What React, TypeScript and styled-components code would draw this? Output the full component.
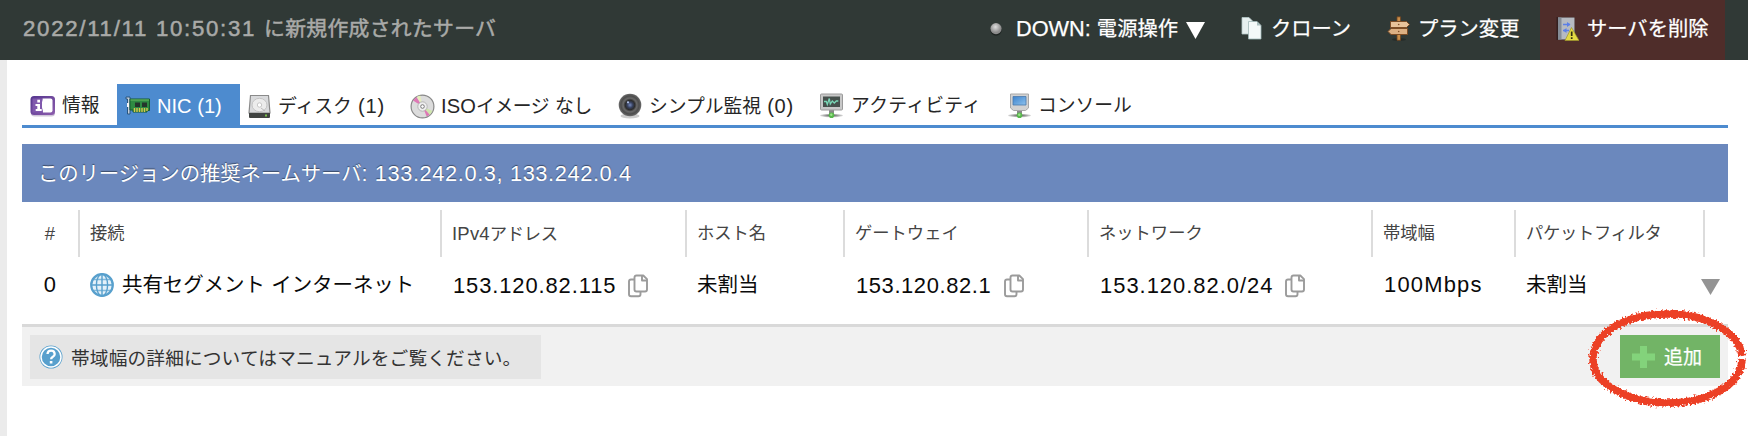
import React from "react";
import styled, { createGlobalStyle } from "styled-components";

const GlobalStyle = createGlobalStyle`
  * { box-sizing: border-box; }
  body {
    margin: 0;
    background: #fff;
    font-family: "Liberation Sans", "Noto Sans CJK JP", sans-serif;
    overflow: hidden;
  }
`;

const Page = styled.div`
  position: relative;
  display: flex;
  flex-direction: column;
  width: 1748px;
  height: 436px;
`;

const TopBar = styled.header`
  display: flex;
  flex: none;
  height: 60px;
  padding-right: 23px;
  background: #303936;
`;

const Title = styled.h1`
  flex: 1;
  margin: 0;
  padding-left: 23px;
  font-size: 20px;
  line-height: 58px;
  font-weight: 400;
  color: #a9aaa8;
  -webkit-text-stroke: 0.5px;
`;

const Action = styled.button<{ $width: number; $icon: number; $danger?: boolean }>`
  display: grid;
  grid-template-columns: ${(p) => p.$icon}px 1fr;
  align-items: center;
  width: ${(p) => p.$width}px;
  height: 60px;
  padding: 1px 0 0;
  border: 0;
  text-align: left;
  line-height: 40px;
  font-family: inherit;
  color: #fff;
  background: ${(p) => (p.$danger ? "#4f2d2a" : "transparent")};
  -webkit-text-stroke: 0.25px;
  svg { justify-self: end; margin: 0 8px 4px 0; }
`;

const Body = styled.div`
  display: flex;
  flex: 1;
`;

const Rail = styled.div`
  flex: none;
  width: 7px;
  background: #ebebeb;
`;

const Main = styled.main`
  display: flex;
  flex-direction: column;
  width: 1721px;
  padding: 24px 0 0 15px;
`;

const Tabs = styled.nav`
  display: flex;
  height: 44px;
  border-bottom: 3px solid #4d8bcf;
`;

const Tab = styled.a<{ $width: number; $gap?: number; $active?: boolean }>`
  display: flex;
  align-items: center;
  flex: none;
  width: ${(p) => p.$width}px;
  height: 41px;
  padding: 4px 0 0 8px;
  gap: ${(p) => p.$gap ?? 6}px;
  line-height: 30px;
  color: ${(p) => (p.$active ? "#fff" : "#262626")};
  background: ${(p) => (p.$active ? "#4d8bcf" : "transparent")};
  svg { margin-bottom: 1px; }
`;

const Notice = styled.div`
  height: 58px;
  margin-top: 16px;
  padding-left: 16px;
  line-height: 60px;
  color: #fff;
  background: #6b88bd;
  text-shadow: 0 -1px 1px rgba(0, 0, 0, 0.45);
`;

const Row = styled.div`
  display: grid;
  grid-template-columns: 56px 362px 245px 158px 244px 284px 143px 189px 25px;
`;

const HeadRow = styled(Row)`
  height: 47px;
  margin-top: 8px;
  line-height: 47px;
  color: #444;
`;

const HeadCell = styled.div`
  height: 47px;
  padding-left: 10px;
  border-left: 2px solid #dcdcdc;
  &:first-child {
    padding: 0;
    border: 0;
    text-align: center;
  }
`;

const DataRow = styled(Row)`
  height: 67px;
  padding-bottom: 10px;
  color: #0a0a0a;
`;

const Cell = styled.div<{ $gap?: number; $drop?: number }>`
  display: flex;
  align-items: center;
  gap: ${(p) => p.$gap ?? 8}px;
  padding-left: 12px;
  padding-top: ${(p) => p.$drop ?? 0}px;
  line-height: 30px;
  &:first-child {
    justify-content: center;
    padding-left: 0;
  }
  svg { margin-bottom: 2px; }
`;

const AddressCell = styled(Cell)`
  padding-left: 13px;
`;

const MenuCell = styled(Cell)`
  padding-left: 0;
  margin-left: -2px;
`;

const Footer = styled.footer`
  display: flex;
  align-items: flex-start;
  justify-content: space-between;
  height: 62px;
  padding: 8px 8px 0;
  border-top: 3px solid #d9d9d9;
  background: #f1f1f1;
`;

const Help = styled.div`
  display: flex;
  align-items: center;
  gap: 8px;
  width: 511px;
  height: 44px;
  padding: 0 0 2px 9px;
  color: #333;
  background: #e5e5e5;
  svg { margin-top: 1px; }
`;

const AddButton = styled.button`
  display: flex;
  align-items: center;
  gap: 8px;
  width: 100px;
  height: 43px;
  padding: 0 0 2px 12px;
  border: 0;
  font-family: inherit;
  color: #fff;
  background: #72b466;
  -webkit-text-stroke: 0.25px;
  svg { margin-top: 2px; }
`;

const Ring = styled.svg`
  position: absolute;
  left: 1580px;
  top: 300px;
  pointer-events: none;
`;

const Run = styled.span<{ $size: number; $spacing: number }>`
  font-size: ${(p) => p.$size}px;
  letter-spacing: ${(p) => p.$spacing}px;
`;

const Line = styled.span`
  white-space: pre;
`;

interface TextProps {
  children: string;
  size: number;
  ls?: number;
  jls?: number;
}

/* Sets Latin runs slightly larger than the Japanese ones, so that their heights agree. */
const Text = ({ children, size, ls = 0.4, jls = 0 }: TextProps) => (
  <Line>
    {children.split(/([\x20-\x7e]+)/).filter(Boolean).map((part, i) => {
      const latin = /^[\x20-\x7e]/.test(part);
      return (
        <Run key={i} $size={latin ? size * 1.07 : size} $spacing={latin ? ls : jls}>
          {part}
        </Run>
      );
    })}
  </Line>
);

const InfoIcon = () => (
  <svg width="26" height="24" viewBox="0 0 26 24">
    <defs>
      <linearGradient id="info" x1="0" y1="0" x2="1" y2="1">
        <stop offset="0" stopColor="#54368e" />
        <stop offset="1" stopColor="#8d5dad" />
      </linearGradient>
    </defs>
    <rect x="1" y="3" width="24" height="19.5" rx="3.5" fill="#cfc6d8" />
    <rect x="0.5" y="2" width="24.5" height="19" rx="3.5" fill="url(#info)" />
    <path d="M12.500 4.500h8q2 0 2 2v10q0 2-2 2h-7.500q-2-6-.5-14z" fill="#fff" />
    <path d="M2.500 4.500h10q-1.500 8 .5 14H2.500z" fill="#8059ad" />
    <path d="M7.300 5.800h2.700v2.600H7.300zM5.500 10h4.500v5h1.700v2H5.700v-2h1.600v-3H5.500z" fill="#fff" />
  </svg>
);

const NicIcon = () => (
  <svg width="26" height="22" viewBox="0 0 26 22">
    <path d="M1 2h4v17H2.5V4H1z" fill="#c8d0da" stroke="#28557e" strokeWidth="1" />
    <path d="M2 8h2v4H2z" fill="#f5f5f5" />
    <path d="M5 4h19.5v11.5H22V17H8v-2H5z" fill="#2e8a42" stroke="#175a2e" />
    <path d="M5.500 5h18.500" stroke="#6dbb62" />
    <path d="M10 7.500h5v4.500h-5zM17 7.500h5v4.500h-5z" fill="#24352c" />
    <path d="M9.500 13v4M12 13v4M14.500 13v4M17 13v4M19.500 13v4M22 13v3" stroke="#d6c64d" strokeWidth="1.4" />
  </svg>
);

const DiskIcon = () => (
  <svg width="23" height="25" viewBox="0 0 23 25">
    <path d="M2.5 1.5h18L22 19H1z" fill="#d9dadc" stroke="#8a8a8a" strokeWidth="1.2" />
    <ellipse cx="11.5" cy="11" rx="7.5" ry="6.7" fill="#ececec" stroke="#c3c3c3" />
    <circle cx="11.5" cy="11" r="2.2" fill="#fff" stroke="#bbb" strokeWidth="0.8" />
    <path d="M13 14l4 3" stroke="#bbb" />
    <path d="M1 19h21v4q0 1-1 1H2q-1 0-1-1z" fill="#404341" />
    <path d="M17 20.5h2v2h-2z" fill="#79c34a" />
  </svg>
);

const DiscIcon = () => (
  <svg width="25" height="25" viewBox="0 0 25 25">
    <circle cx="12.5" cy="12.5" r="11.4" fill="#dcdcdc" stroke="#888" strokeWidth="1.2" />
    <path d="M12.5 12.5L3 6.5 6.5 3z" fill="#dd78b5" />
    <path d="M12.5 12.5l7 8.7 3-4.2z" fill="#cfe6ad" />
    <path d="M12.5 12.5l4.2 10 3-1.7z" fill="#dd78b5" />
    <path d="M12.5 12.5L6.8 2.8l3.5-1.3z" fill="#e6eebc" />
    <circle cx="12.5" cy="12.5" r="4.7" fill="#eee" stroke="#aaa" strokeWidth="0.8" />
    <circle cx="12.5" cy="12.5" r="1.8" fill="#fff" stroke="#777" />
  </svg>
);

const LensIcon = () => (
  <svg width="24" height="26" viewBox="0 0 24 26">
    <defs>
      <radialGradient id="lens">
        <stop offset="0" stopColor="#7589bd" />
        <stop offset="0.25" stopColor="#36405c" />
        <stop offset="0.42" stopColor="#2c2c2c" />
        <stop offset="0.6" stopColor="#6a6a6a" />
        <stop offset="0.8" stopColor="#4c4c4c" />
        <stop offset="1" stopColor="#6c6c6c" />
      </radialGradient>
    </defs>
    <ellipse cx="12" cy="23" rx="9.5" ry="2.5" fill="#ccc" />
    <circle cx="12" cy="12" r="11.3" fill="url(#lens)" />
    <circle cx="10" cy="9.3" r="1.1" fill="#b3c3ea" />
  </svg>
);

const MonitorIcon = ({ activity }: { activity?: boolean }) => (
  <svg width="25" height="26" viewBox="0 0 25 26">
    <defs>
      <linearGradient id="screen" x1="0" y1="0" x2="1" y2="1">
        <stop offset="0" stopColor="#3d83cd" />
        <stop offset="1" stopColor="#8ec2ed" />
      </linearGradient>
      <radialGradient id="shade">
        <stop offset="0" stopColor="#555" />
        <stop offset="1" stopColor="#ddd" />
      </radialGradient>
    </defs>
    <ellipse cx="12.5" cy="22.5" rx="11.5" ry="1.8" fill="url(#shade)" />
    <path d="M10 17h5v5h-5z" fill="#888" />
    {activity ? (
      <>
        <rect x="1.5" y="1" width="22" height="16" rx="1" fill="#c8c8c8" stroke="#9b9b9b" />
        <path d="M4 3.5h17v10.5H4z" fill="#46504c" />
        <path d="M5 8.5h2.3l1 3 2-6 1 5.5 2-3 2 2 2-2h2" fill="none" stroke="#7ad7b6" strokeWidth="1.3" />
      </>
    ) : (
      <>
        <path d="M3.500 1h18v14l-3 2.500H6.500l-3-2.500z" fill="#d2d2d2" stroke="#a8a8a8" />
        <path d="M6 3.500h13v8.500H6z" fill="url(#screen)" stroke="#4a79ac" strokeWidth="0.8" />
      </>
    )}
    <circle cx="12.5" cy="22.3" r="2.8" fill="#58b84d" />
    <circle cx="12.3" cy="21.7" r="1.2" fill="#9de28a" />
  </svg>
);

const LampIcon = () => (
  <svg width="14" height="14" viewBox="0 0 14 14">
    <defs>
      <radialGradient id="lamp" cx="0.45" cy="0.35">
        <stop offset="0" stopColor="#dedede" />
        <stop offset="1" stopColor="#8b8b8b" />
      </radialGradient>
    </defs>
    <circle cx="7" cy="8" r="5.8" fill="#1f2523" />
    <circle cx="7" cy="6.6" r="5.6" fill="url(#lamp)" />
  </svg>
);

const CloneIcon = () => (
  <svg width="22" height="25" viewBox="0 0 22 25">
    <path d="M1 1.5h7l3.5 3.5v13H1z" fill="#e6efef" stroke="#b4c8c8" strokeWidth="0.8" />
    <path d="M7.5 5.5h8.5l4 4v13.5H7.5z" fill="#f4f9f9" stroke="#a0b8b8" strokeWidth="0.8" />
    <path d="M16 5.5v4h4z" fill="#a9bebe" />
  </svg>
);

const SignIcon = () => (
  <svg width="23" height="26" viewBox="0 0 23 26">
    <ellipse cx="12" cy="23.5" rx="7" ry="1.5" fill="#242b29" />
    <path d="M10 0.8h3.5v23.5H10z" fill="#c98d49" stroke="#704420" strokeWidth="0.8" />
    <path d="M3.500 5.500h16l3 3-3 3h-16z" fill="#e8c39a" stroke="#7d4d25" strokeWidth="1" />
    <path d="M20.500 12.500H4l-3 3 3 3h16.500z" fill="#dcb083" stroke="#7d4d25" strokeWidth="1" />
    <circle cx="11.7" cy="8.5" r="0.8" fill="#805128" />
    <circle cx="11.7" cy="15.5" r="0.8" fill="#805128" />
  </svg>
);

const ServerIcon = () => (
  <svg width="23" height="26" viewBox="0 0 23 26">
    <path d="M0.500 24V1h18v23z" fill="#342020" />
    <path d="M2 1.5h16.5v22H2z" fill="#b6bac1" />
    <path d="M2 1.5h3.5v22H2z" fill="#858c96" />
    <path d="M7 8.5h7M7 14.5h6" stroke="#5b7fe8" strokeWidth="1.3" />
    <path d="M11 6l3.500 2.500-3.500 2.500zM10.500 12l-3.500 2.500 3.500 2.500z" fill="#5b7fe8" />
    <path d="M15.5 11.5l7.5 13H9z" fill="#e4d943" stroke="#9d952b" strokeWidth="0.7" />
    <path d="M15.7 15.5v4.5M15.7 21.3v1.7" stroke="#322f12" strokeWidth="1.7" />
  </svg>
);

const GlobeIcon = () => (
  <svg width="24" height="24" viewBox="0 0 24 24" fill="none" stroke="#58a0cd" strokeWidth="1.4">
    <circle cx="12" cy="12" r="10.8" fill="#e4f1f9" strokeWidth="2.2" />
    <ellipse cx="12" cy="12" rx="5.6" ry="11" />
    <path d="M12 1v22M1 12h22" />
    <path d="M3 6.500h18M3 17.500h18" strokeOpacity="0.7" />
  </svg>
);

const CopyIcon = () => (
  <svg width="20" height="24" viewBox="0 0 20 24" fill="none" stroke="#9b9b9b" strokeWidth="1.9" strokeLinejoin="round">
    <path d="M8.5 1.5h6.8l3.7 3.7v10.3q0 2-2 2H8.5q-2 0-2-2v-12q0-2 2-2z" />
    <path d="M14 1.5v5H19" />
    <path d="M6 5.5H3q-2 0-2 2v12.800q0 2 2 2h7.500q2 0 2-2V18" />
  </svg>
);

const HelpIcon = () => (
  <svg width="24" height="24" viewBox="0 0 24 24">
    <circle cx="12" cy="12" r="11.5" fill="#58a0cd" />
    <circle cx="12" cy="12" r="10" fill="none" stroke="#fff" strokeWidth="1.5" />
    <path d="M8.5 9q.3-3.300 3.600-3.300T15.700 9q0 1.700-1.800 2.700t-1.800 2.500" fill="none" stroke="#fff" strokeWidth="2.3" />
    <path d="M10.8 16h2.600v2.500h-2.600z" fill="#fff" />
  </svg>
);

const Triangle = ({ color, height }: { color: string; height: number }) => (
  <svg width="19" height={height} viewBox="0 0 19 16" preserveAspectRatio="none">
    <path d="M0 0h19L9.5 16z" fill={color} />
  </svg>
);

const PowerLabel = styled.span`
  display: flex;
  align-items: center;
  gap: 8px;
  && svg { margin: 0; }
`;

const LampSlot = styled.span`
  display: flex;
  justify-content: flex-end;
  padding-right: 5px;
`;

export default function App() {
  return (
    <Page>
      <GlobalStyle />
      <TopBar>
        <Title>
          <Text size={20.8} ls={1.7} jls={0.33}>2022/11/11 10:50:31 に新規作成されたサーバ</Text>
        </Title>
        <Action $width={250} $icon={37}>
          <LampSlot><LampIcon /></LampSlot>
          <PowerLabel>
            <Text size={20.3} ls={0}>DOWN: 電源操作</Text>
            <Triangle color="#fff" height={17} />
          </PowerLabel>
        </Action>
        <Action $width={144} $icon={42}>
          <CloneIcon />
          <Text size={20.3}>クローン</Text>
        </Action>
        <Action $width={167} $icon={45}>
          <SignIcon />
          <Text size={20.3}>プラン変更</Text>
        </Action>
        <Action $width={185} $icon={47} $danger>
          <ServerIcon />
          <Text size={20.3}>サーバを削除</Text>
        </Action>
      </TopBar>
      <Body>
        <Rail />
        <Main>
          <Tabs>
            <Tab $width={95}><InfoIcon /><Text size={18.8}>情報</Text></Tab>
            <Tab $width={123} $active><NicIcon /><Text size={18.8} ls={0}>NIC (1)</Text></Tab>
            <Tab $width={162} $gap={7}><DiskIcon /><Text size={18.8} ls={0.7}>ディスク (1)</Text></Tab>
            <Tab $width={208}><DiscIcon /><Text size={18.8} ls={0.1} jls={-0.35}>ISOイメージ なし</Text></Tab>
            <Tab $width={201} $gap={7}><LensIcon /><Text size={18.8} ls={0.6}>シンプル監視 (0)</Text></Tab>
            <Tab $width={188} $gap={7}><MonitorIcon activity /><Text size={18.8} jls={0.3}>アクティビティ</Text></Tab>
            <Tab $width={160}><MonitorIcon /><Text size={18.8}>コンソール</Text></Tab>
          </Tabs>
          <Notice>
            <Text size={20.4} ls={0.6} jls={-0.1}>このリージョンの推奨ネームサーバ: 133.242.0.3, 133.242.0.4</Text>
          </Notice>
          <HeadRow>
            <HeadCell><Text size={17.3}>#</Text></HeadCell>
            <HeadCell><Text size={17.3}>接続</Text></HeadCell>
            <HeadCell><Text size={17.3} ls={0.2} jls={-0.3}>IPv4アドレス</Text></HeadCell>
            <HeadCell><Text size={17.3}>ホスト名</Text></HeadCell>
            <HeadCell><Text size={17.3}>ゲートウェイ</Text></HeadCell>
            <HeadCell><Text size={17.3}>ネットワーク</Text></HeadCell>
            <HeadCell><Text size={17.3}>帯域幅</Text></HeadCell>
            <HeadCell><Text size={17.3} jls={-0.3}>パケットフィルタ</Text></HeadCell>
            <HeadCell />
          </HeadRow>
          <DataRow>
            <Cell><Text size={20.5}>0</Text></Cell>
            <Cell><GlobeIcon /><Text size={20.5} jls={-0.1}>共有セグメント インターネット</Text></Cell>
            <AddressCell $gap={12} $drop={3}><Text size={20.5} ls={0.9}>153.120.82.115</Text><CopyIcon /></AddressCell>
            <Cell><Text size={20.5}>未割当</Text></Cell>
            <AddressCell $gap={13} $drop={3}><Text size={20.5} ls={0.6}>153.120.82.1</Text><CopyIcon /></AddressCell>
            <AddressCell $gap={12} $drop={3}><Text size={20.5} ls={1}>153.120.82.0/24</Text><CopyIcon /></AddressCell>
            <AddressCell><Text size={20.5} ls={1.2}>100Mbps</Text></AddressCell>
            <Cell><Text size={20.5}>未割当</Text></Cell>
            <MenuCell $drop={4}><Triangle color="#949494" height={16} /></MenuCell>
          </DataRow>
          <Footer>
            <Help>
              <HelpIcon />
              <Text size={18.7} jls={0.14}>帯域幅の詳細についてはマニュアルをご覧ください。</Text>
            </Help>
            <AddButton>
              <svg width="24" height="24" viewBox="0 0 24 24">
                <path d="M8 1h7v7.5h8v7h-8V23H8v-7.5H0v-7h8z" fill="#83d37b" />
              </svg>
              <Text size={19}>追加</Text>
            </AddButton>
          </Footer>
        </Main>
      </Body>
      <Ring width="168" height="116" viewBox="0 0 168 116" fill="none" stroke="#ec4025">
        <defs>
          <filter id="chalk" x="-10%" y="-10%" width="120%" height="120%">
            <feTurbulence type="fractalNoise" baseFrequency="0.5" numOctaves="2" seed="4" />
            <feDisplacementMap in="SourceGraphic" scale="7" xChannelSelector="R" yChannelSelector="G" />
          </filter>
        </defs>
        <path
          d="M162 56C159 32 127 14 87 14S14 32 13 58s36 45 75 45 73-17 74-44"
          strokeWidth="7.5"
          filter="url(#chalk)"
        />
        <path d="M162 55C159 31 127 13 87 13S14 31 13 57s36 45 75 45 73-17 74-43" strokeWidth="4.5" />
      </Ring>
    </Page>
  );
}
